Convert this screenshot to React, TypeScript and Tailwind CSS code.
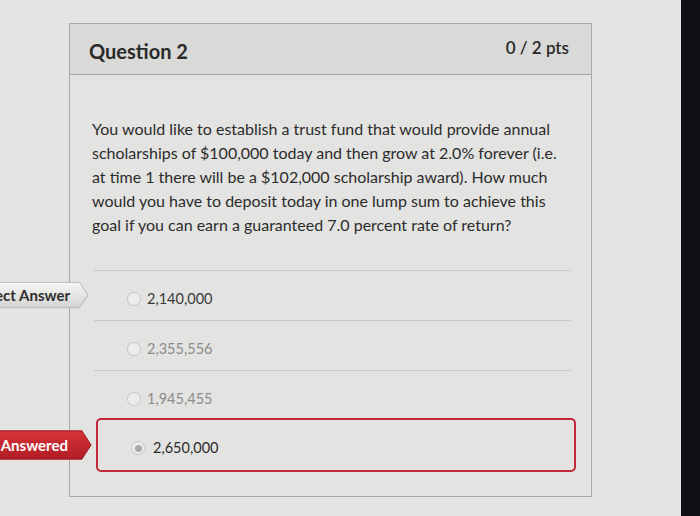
import React from "react";

type Answer = {
  text: string;
  tone: "dark" | "muted";
  selected?: boolean;
  tag?: "correct" | "answered";
};

const answers: Answer[] = [
  { text: "2,140,000", tone: "dark", tag: "correct" },
  { text: "2,355,556", tone: "muted" },
  { text: "1,945,455", tone: "muted" },
  { text: "2,650,000", tone: "dark", selected: true, tag: "answered" },
];

const Tag = ({ kind }: { kind: "correct" | "answered" }) => {
  const correct = kind === "correct";
  return (
    <div
      className={`absolute -left-[70px] top-1/2 -translate-y-1/2 flex items-center justify-end ${
        correct ? "h-[27px] w-[89px] pr-[19px]" : "h-[30px] w-[92px] pr-[24px]"
      }`}
    >
      <svg
        className="absolute inset-0 h-full w-full"
        viewBox="0 0 100 30"
        preserveAspectRatio="none"
      >
        <defs>
          <linearGradient id={`g-${kind}`} x1="0" y1="0" x2="0" y2="1">
            {correct ? (
              <>
                <stop offset="0" stopColor="#f6f6f4" />
                <stop offset="1" stopColor="#d3d3d1" />
              </>
            ) : (
              <>
                <stop offset="0" stopColor="#d8333a" />
                <stop offset="1" stopColor="#b11c24" />
              </>
            )}
          </linearGradient>
        </defs>
        <polygon
          points="-2,0.8 89,0.8 99,15 89,29.2 -2,29.2"
          fill={`url(#g-${kind})`}
          stroke={correct ? "#b3b3b1" : "#9e1a20"}
          strokeWidth="1"
          vectorEffect="non-scaling-stroke"
        />
      </svg>
      <span
        className={`relative whitespace-nowrap text-[15px] font-bold ${
          correct ? "text-[#2e2e2e]" : "text-white"
        }`}
      >
        {correct ? "Correct Answer" : "Answered"}
      </span>
    </div>
  );
};

const Radio = ({ checked }: { checked?: boolean }) => (
  <span className="flex h-[14px] w-[14px] shrink-0 items-center justify-center rounded-full border border-[#c6c6c4] bg-[#ececea]">
    {checked && <span className="h-[7px] w-[7px] rounded-full bg-[#a9a9a7]" />}
  </span>
);

export default function App() {
  return (
    <div
      className="flex h-[516px] w-[700px] overflow-hidden bg-[#e4e4e2] text-[#2c2c2c]"
      style={{ fontFamily: "Lato, 'Noto Sans', sans-serif" }}
    >
      <div className="flex-1 pl-[69px] pt-[23px]">
        <div className="h-[474px] w-[523px] border border-[#a8a8a6] bg-[#e3e3e1]">
          <div className="flex h-[51px] items-center justify-between border-b border-[#a3a3a1] bg-[#d9d9d7] pl-[19px] pr-[22px]">
            <h2 className="pt-[3px] text-[20px] font-bold text-[#2a2a2a]">Question 2</h2>
            <span className="pb-[3px] text-[17px] font-semibold text-[#2a2a2a]">0 / 2 pts</span>
          </div>

          <div className="pl-[22px] pt-[42px]">
            <p className="text-[16px] leading-[24px] text-[#2c2c2c]">
              You would like to establish a trust fund that would provide annual
              <br />
              scholarships of $100,000 today and then grow at 2.0% forever (i.e.
              <br />
              at time 1 there will be a $102,000 scholarship award). How much
              <br />
              would you have to deposit today in one lump sum to achieve this
              <br />
              goal if you can earn a guaranteed 7.0 percent rate of return?
            </p>
          </div>

          <div className="mt-[33px] flex flex-col">
            {answers.map((a, i) =>
              a.selected ? (
                <div key={i} className="relative mt-[-2px]">
                  {a.tag && <Tag kind={a.tag} />}
                  <div className="ml-[26px] mr-[15px] flex h-[54px] items-center gap-[8px] rounded-[5px] border-2 border-[#c2283a] pl-[33px] pt-[6px]">
                    <Radio checked />
                    <span className="text-[14.5px] text-[#2c2c2c]">{a.text}</span>
                  </div>
                </div>
              ) : (
                <div key={i} className="relative">
                  {a.tag && <Tag kind={a.tag} />}
                  <div className="ml-[24px] mr-[20px] flex h-[50px] items-center gap-[6px] border-t border-[#c9c9c7] pl-[33px] pt-[6px]">
                    <Radio />
                    <span
                      className={`text-[14.5px] ${
                        a.tone === "dark" ? "text-[#3a3a3a]" : "text-[#8c8c8a]"
                      }`}
                    >
                      {a.text}
                    </span>
                  </div>
                </div>
              )
            )}
          </div>
        </div>
      </div>
      <div className="w-[19px] bg-[#0f1013]" />
    </div>
  );
}
